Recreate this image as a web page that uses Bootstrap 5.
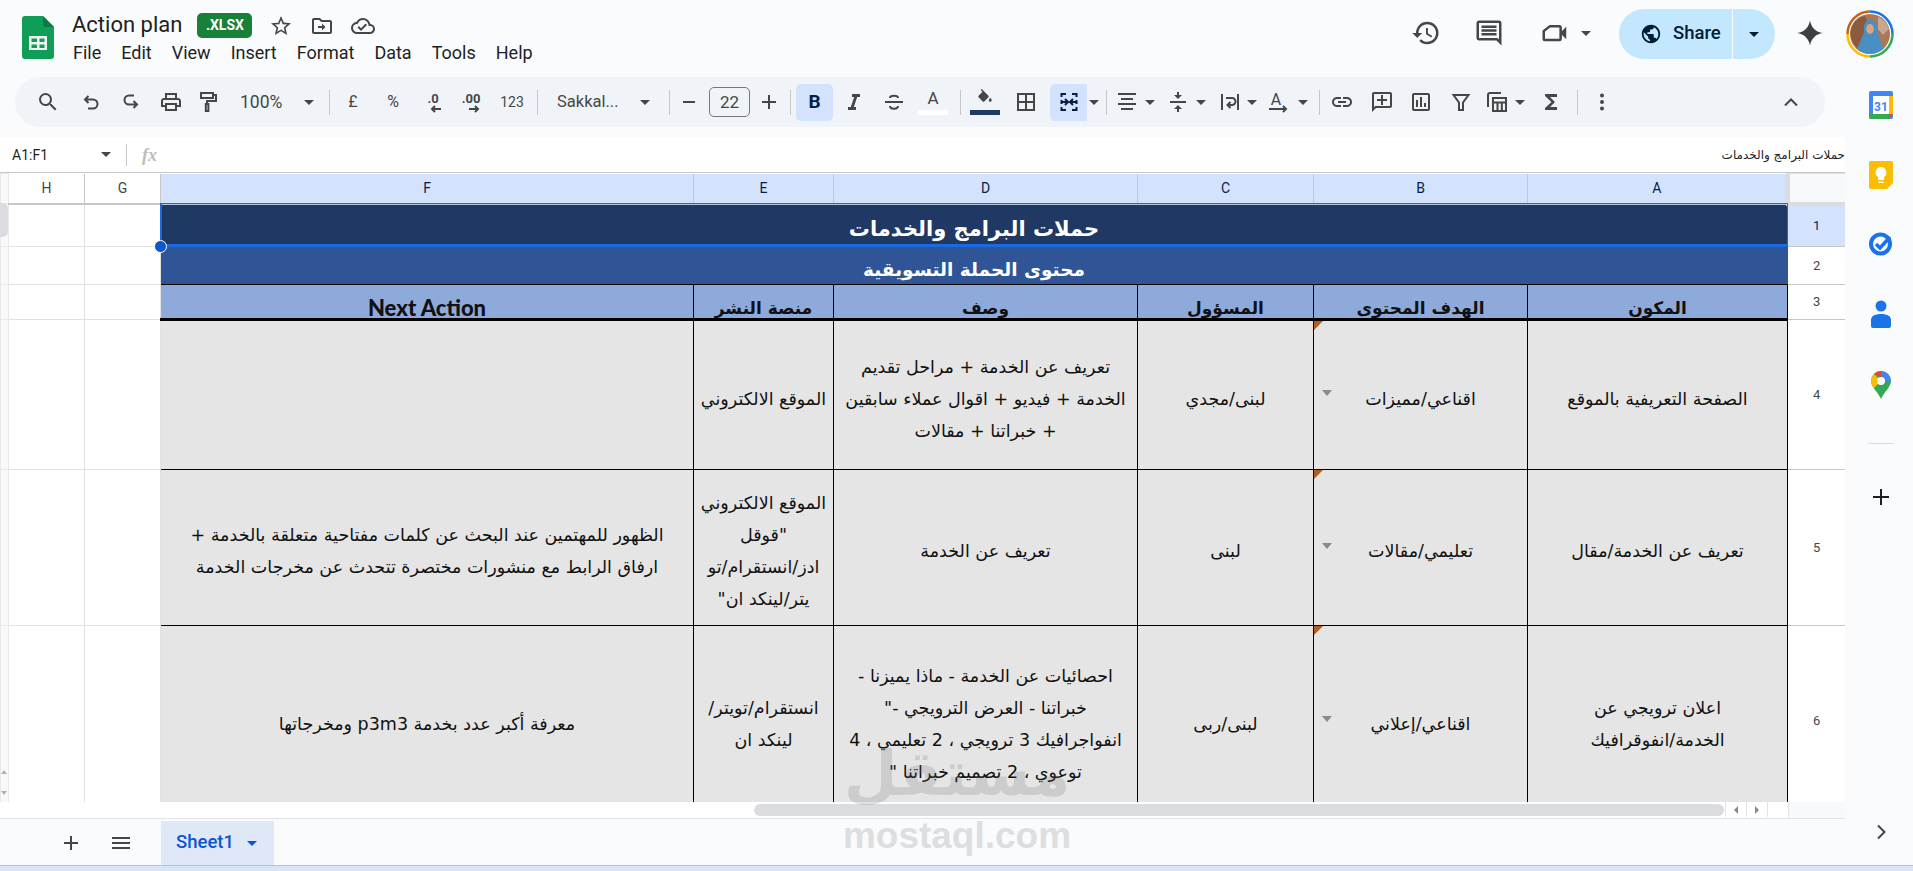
<!DOCTYPE html>
<html lang="en">
<head>
<meta charset="utf-8">
<title>Action plan</title>
<link href="https://cdn.jsdelivr.net/npm/bootstrap@5.3.0/dist/css/bootstrap.min.css" rel="stylesheet">
<style>
html,body{margin:0;height:871px;width:1913px;overflow:hidden;background:#f9fbfd;font-family:Roboto,"Liberation Sans",sans-serif;color:#1f1f1f}
svg{display:block;flex:none}
.ic{width:24px;height:24px;fill:#444746;flex:none}
.st{fill:none;stroke:#444746;stroke-width:2}
.topbar{height:77px;position:relative}
.logo{width:32px;height:43px;margin:16px 0 0 22px}
.titlecol{margin-left:18px;padding-top:9px}
.doctitle{font-size:22px;line-height:32px;color:#1f1f1f}
.xl{background:#188038;color:#fff;font-size:14px;font-weight:700;border-radius:5px;width:55px;height:25px;line-height:25px;text-align:center;margin-left:15px;margin-top:4px}
.tt1{margin-left:17px;margin-top:5px}.tt2{margin-left:17px;margin-top:5px}
.menuitem{font-size:18px;line-height:24px;color:#1f1f1f;margin-right:20px}
.menurow{margin-top:0;margin-left:1px}
.hic{width:30px;height:30px;fill:#444746;margin-top:18px}
.hg33{margin-left:33px}.hg36{margin-left:36px}
.caretm{margin-top:31px}
.sharebtn{height:50px;width:156px;background:#c2e7ff;border-radius:25px;color:#001d35;margin:9px 0 0 28px}
.sharemain{width:114px;border-right:1px solid #f9fbfd;padding-left:21px;gap:11px;font-size:18.5px;font-weight:500}
.sharecaret{width:41px}
.sglobe{width:22px;height:22px;fill:#001d35}
.gem{margin:19px 0 0 21px;width:28px;height:28px;fill:#3c4043}
.avatar{width:50px;height:50px;margin:9px 18px 0 21px}
.caret{width:10px;height:5px;flex:none;fill:#444746}
.mainarea{width:1845px;flex:none}
.tbwrap{height:60px;padding:0 20px 10px 15px}
.pill{height:50px;background:#f0f4f9;border-radius:25px}
.tsep{width:1px;height:25px;background:#c7c7c7;flex:none}
.tt{font-size:17.5px;color:#444746;flex:none}
.tsak{font-size:16.5px}
.w45{width:45px}.w66{width:66px}
.fs-box{width:41px;height:30px;border:1px solid #747775;border-radius:5px;text-align:center;line-height:28px;font-size:17px;color:#444746;flex:none}
.tog{width:37px;height:37px;background:#d3e3fd;flex:none;border-radius:5px}
.togl{border-radius:5px 0 0 5px}
.blet{font-weight:700;font-size:19px;color:#041e49}
.alet{width:30px;flex:none;text-align:center;font-size:17px;line-height:17px;color:#444746}
.colorbar{height:5px;width:30px;margin-top:3px}
.bfill{background:#1f3864}.bwhite{background:#fff}
.g2{margin-left:2px}.g5{margin-left:5px}.g6{margin-left:6px}.g7{margin-left:7px}.g8{margin-left:8px}.g9{margin-left:9px}.g10{margin-left:10px}.g11{margin-left:11px}.g12{margin-left:12px}.g13{margin-left:13px}.g14{margin-left:14px}.g15{margin-left:15px}.g16{margin-left:16px}.g17{margin-left:17px}.g19{margin-left:19px}.g20{margin-left:20px}.g21{margin-left:21px}
.collapsebtn{margin-right:22px}
.fxbar{height:35px;background:#fff;position:relative}
.namebox{width:127px;padding-left:12px;font-size:14px;border-right:1px solid #c7c7c7;height:22px;line-height:22px;color:#1f1f1f}
.namecaretw{margin-left:auto;margin-right:15px}
.fxlbl{font-family:"Liberation Serif",serif;font-style:italic;font-size:18px;font-weight:700;color:#bdbdbd;margin-left:15px;line-height:22px}
.fxval{font-size:12px;line-height:30px;color:#222;font-family:"DejaVu Sans",sans-serif;letter-spacing:-.7px}
.sheetwrap{height:630px;overflow:hidden;position:relative;background:#fff;border-top:1px solid #c7c7c7}
.sheet{table-layout:fixed;width:1845px;border-collapse:collapse;font-family:"DejaVu Sans",sans-serif}
.sheet td{padding:0;text-align:center;vertical-align:middle;overflow:hidden;border:1px solid #e1e1e1}
.cstub{width:8px}.ch{width:76px}.cf{width:533px}.ce{width:140px}.cd{width:304px}.cc{width:176px}.cb{width:214px}.ca{width:260px}.crh{width:58px}
.rhead{height:30px}.r1{height:43px}.r2{height:38px}.r3{height:35px}.r4{height:150px}.r5{height:156px}.r6{height:190px}
.sheet td.colh{font-family:Roboto,sans-serif;font-size:14px;color:#444746;border-color:#c7c7c7;border-top:0;border-bottom:2px solid #c7c7c7}
.sheet td.colsel{background:#d3e3fd;color:#041e49;border-bottom-color:#b5c5dd}
.sheet td.corner{background:#f8f9fa;border-left:4px solid #dadce0;border-bottom:4px solid #dadce0}
.sheet td.stub{background:#f8f9fa;border-color:#e9e9e9}
.sheet td.rown{font-family:Roboto,sans-serif;font-size:13px;color:#444746;border-color:#c7c7c7;border-right:0}
.sheet td.rowsel{background:#d3e3fd;color:#041e49}
.sheet td.t1{background:#1f3864;color:#fff;font-size:21px;font-weight:700;border:1px solid #1f3864;border-bottom:0;padding-top:8px}
.sheet td.t2{background:#2f5597;color:#fff;font-size:18.5px;font-weight:700;border:1px solid #2f5597;border-bottom:1px solid #000;padding-top:8px;line-height:26px}
.sheet td.hdc{background:#8eaadb;color:#111;font-weight:700;font-size:17px;border:1px solid #000;border-bottom:3px solid #000;vertical-align:bottom}
.hdi{height:32px;line-height:44px;overflow:hidden;white-space:nowrap}
.hdlat{font-family:Lato,sans-serif;font-size:22px;font-weight:900}
.sheet td.dc{background:#e5e5e5;color:#111;font-size:17.5px;line-height:32px;border:1px solid #000;white-space:nowrap;position:relative;padding-top:7px}
.note{position:absolute;left:0;top:0;width:0;height:0;border-top:9px solid #b85c1a;border-right:9px solid transparent}
.dd{position:absolute;left:8px;top:50%;margin-top:-5px;width:0;height:0;border-top:6px solid #8a8a8a;border-left:5px solid transparent;border-right:5px solid transparent}
.sel{position:absolute;left:160px;top:30px;width:1628px;height:44px;border:1px solid #1a6ae4;border-left-width:2px;border-bottom-width:3px;pointer-events:none}
.handle{position:absolute;left:154px;top:67px;width:13px;height:13px;border-radius:50%;background:#0b57d0;border:1px solid #fff}
.vthumb{position:absolute;left:0;top:30px;width:8px;height:34px;background:#dadce0;border-radius:0 5px 5px 0}
.varr{position:absolute;left:1px;width:0;height:0;border-left:3px solid transparent;border-right:3px solid transparent}
.vup{top:597px;border-bottom:4px solid #b0b0b0}
.vdn{top:618px;border-top:4px solid #b0b0b0}
.hbar{height:16px;background:#fff;position:relative}
.hthumb{width:980px;height:12px;margin:2px 0 0 754px;background:#dadce0;border-radius:6px}
.harr{width:21px;border-left:1px solid #e3e3e3;height:15px;flex:none}
.ha1{margin-left:1px}
.hl,.hr{width:0;height:0;border-top:4px solid transparent;border-bottom:4px solid transparent}
.hl{border-right:4px solid #888}.hr{border-left:4px solid #888}
.hcor{width:58px;background:#f8f9fa;margin-left:auto;border-left:1px solid #e3e3e3}
.tabbar{height:47px;border-top:1px solid #e1e3e6;padding-top:2px}
.tabadd{margin-left:59px}
.tabmenu{margin-left:26px}
.stab{width:113px;height:44px;margin-left:28px;background:#dfe8f6;color:#0b57d0;font-weight:500;font-size:18.5px;padding-left:15px;gap:13px}
.caretb{fill:#0b57d0}
.sidep{width:68px;flex:none;padding-top:13px;height:788px}
.sico{width:26px;height:30px;margin-left:23px}
.sp1{margin-top:0}.sp2{margin-top:40px}.sp3{margin-top:39px}.sp4{margin-top:40px}.sp5{margin-top:41px}
.sline{width:26px;height:1px;background:#dadce0;margin:43px 0 0 23px}
.sadd{margin:41px 0 0 24px}
.schev{margin:311px 0 0 24px}
.wall{height:6px;background:#d7e5f6;border-top:1px solid #b9c3d0}
.wm{position:absolute;left:842px;top:732px;width:230px;text-align:center;color:#6d6d6d;opacity:.2;pointer-events:none;z-index:5}
.wm1{font-family:"DejaVu Sans",sans-serif;font-weight:700;font-size:62px;line-height:84px;white-space:nowrap}
.wm2{font-family:"Liberation Sans",sans-serif;font-weight:700;font-size:37px;line-height:40px;white-space:nowrap}
</style>
</head>
<body>
<div class="topbar d-flex">
  <svg class="logo" viewBox="0 0 32 43"><path d="M3 0h18l11 11v29a3 3 0 0 1-3 3H3a3 3 0 0 1-3-3V3a3 3 0 0 1 3-3z" fill="#0f9d58"/><path d="M21 0l11 11H23a2 2 0 0 1-2-2z" fill="#0b7a45"/><path d="M7 20h18v14H7zm2.500 2.500v3.500h5.500v-3.500zm8 0v3.500h5v-3.500zm-8 6v3.500h5.500v-3.500zm8 0v3.500h5v-3.500z" fill="#f1f1f1" fill-rule="evenodd"/></svg>
  <div class="titlecol">
    <div class="d-flex align-items-start">
      <div class="doctitle">Action plan</div>
      <div class="xl">.XLSX</div>
      <svg class="ic tt1" viewBox="0 0 24 24"><path d="M22 9.240l-7.190-.62L12 2 9.190 8.630 2 9.240l5.460 4.730L5.820 21 12 17.270 18.180 21l-1.630-7.030L22 9.240zM12 15.400l-3.760 2.270 1-4.280-3.320-2.880 4.380-.38L12 6.100l1.710 4.040 4.380.38-3.320 2.880 1 4.280L12 15.400z"/></svg>
      <svg class="ic tt2" viewBox="0 0 24 24"><path d="M20 6h-8l-2-2H4c-1.100 0-2 .9-2 2v12c0 1.100.9 2 2 2h16c1.100 0 2-.9 2-2V8c0-1.100-.9-2-2-2zm0 12H4V6h5.170l2 2H20v10z"/><path d="M12 12H8v2h4v2.500l3.500-3.500L12 9.500z"/></svg>
      <svg class="ic tt2" viewBox="0 0 24 24"><path d="M19.350 10.040A7.490 7.490 0 0 0 12 4C9.110 4 6.600 5.640 5.350 8.040A5.994 5.994 0 0 0 0 14c0 3.310 2.690 6 6 6h13c2.760 0 5-2.240 5-5 0-2.640-2.050-4.780-4.650-4.960zM19 18H6c-2.210 0-4-1.790-4-4 0-2.050 1.530-3.760 3.560-3.970l1.070-.11.5-.95A5.469 5.469 0 0 1 12 6c2.620 0 4.880 1.860 5.390 4.430l.3 1.500 1.530.11A2.980 2.980 0 0 1 22 15c0 1.650-1.350 3-3 3zm-9-3.820l-2.090-2.090L6.500 13.500 10 17l6.010-6.010-1.410-1.410z"/></svg>
    </div>
    <div class="d-flex menurow">
      <span class="menuitem">File</span><span class="menuitem">Edit</span><span class="menuitem">View</span><span class="menuitem">Insert</span><span class="menuitem">Format</span><span class="menuitem">Data</span><span class="menuitem">Tools</span><span class="menuitem">Help</span>
    </div>
  </div>
  <div class="ms-auto d-flex align-items-start">
    <svg class="hic" viewBox="0 0 24 24"><path d="M13 3a9 9 0 0 0-9 9H1l3.890 3.890.07.14L9 12H6c0-3.870 3.130-7 7-7s7 3.130 7 7-3.130 7-7 7c-1.930 0-3.680-.79-4.940-2.060l-1.420 1.420A8.954 8.954 0 0 0 13 21a9 9 0 0 0 0-18zm-1 5v5l4.280 2.540.72-1.210-3.500-2.080V8H12z"/></svg>
    <svg class="hic hg33" viewBox="0 0 24 24"><path d="M21.990 4c0-1.100-.89-2-1.990-2H4c-1.100 0-2 .9-2 2v12c0 1.100.9 2 2 2h14l4 4-.01-18zM20 4v13.170L18.830 16H4V4h16zM6 12h12v2H6zm0-3h12v2H6zm0-3h12v2H6z"/></svg>
    <svg class="hic hg36" viewBox="0 0 24 24"><path class="st" d="M8 6.500h7.500a1 1 0 0 1 1 1v9a1 1 0 0 1-1 1H4a1 1 0 0 1-1-1v-6z"/><path d="M17 11l4-4v10l-4-4z"/></svg>
    <svg class="caret g11 caretm" viewBox="0 0 10 5"><path d="M0 0h10L5 5z"/></svg>
    <div class="sharebtn d-flex">
      <div class="sharemain d-flex align-items-center">
        <svg class="sglobe" viewBox="0 0 24 24"><path d="M12 2C6.480 2 2 6.480 2 12s4.480 10 10 10 10-4.480 10-10S17.520 2 12 2zm-1 17.930c-3.950-.49-7-3.850-7-7.930 0-.62.08-1.210.21-1.790L9 15v1c0 1.100.9 2 2 2v1.930zm6.900-2.540c-.26-.81-1-1.390-1.900-1.390h-1v-3c0-.55-.45-1-1-1H8v-2h2c.55 0 1-.45 1-1V7h2c1.100 0 2-.9 2-2v-.41c2.930 1.190 5 4.060 5 7.410 0 2.080-.8 3.970-2.100 5.390z"/></svg>
        <span>Share</span>
      </div>
      <div class="sharecaret d-flex align-items-center justify-content-center">
        <svg class="caret" viewBox="0 0 10 5"><path fill="#001d35" d="M0 0h10L5 5z"/></svg>
      </div>
    </div>
    <svg class="gem" viewBox="0 0 24 24"><path d="M12 1C12.800 7 17 11.200 23 12 17 12.800 12.800 17 12 23 11.200 17 7 12.800 1 12 7 11.200 11.200 7 12 1z"/></svg>
    <svg class="avatar" viewBox="0 0 50 50">
      <circle cx="25" cy="25" r="20" fill="#a9785a"/>
      <path d="M6 20a19.500 19.500 0 0 1 14-13L25 20l-8 22a20 20 0 0 1-11-22z" fill="#8c5a3c"/>
      <path d="M33 8a20 20 0 0 1 11 12l-6 6-5-6z" fill="#c7a78f"/>
      <path d="M25 11c5 0 7 4 7 9 0 3 1 6 3 10l3 10a20 20 0 0 1-26 0l5-12c2-4 2-5 2-8 0-5 1-9 6-9z" fill="#4a8fc4"/>
      <ellipse cx="25" cy="20" rx="3.800" ry="5" fill="#d9a583"/>
      <path d="M25 2.500a22.500 22.500 0 0 1 22.500 22.500" fill="none" stroke="#1a73e8" stroke-width="2.500"/>
      <path d="M47.500 25A22.500 22.500 0 0 1 25 47.500" fill="none" stroke="#34a853" stroke-width="2.500"/>
      <path d="M25 47.500A22.500 22.500 0 0 1 2.500 25" fill="none" stroke="#fbbc04" stroke-width="2.500"/>
      <path d="M2.500 25A22.500 22.500 0 0 1 25 2.500" fill="none" stroke="#c5620f" stroke-width="2.500"/>
    </svg>
  </div>
</div>

<div class="d-flex">
  <div class="mainarea">
    <div class="tbwrap">
      <div class="pill d-flex align-items-center">
        <svg class="ic g21" viewBox="0 0 24 24"><path d="M15.500 14h-.79l-.28-.27A6.471 6.471 0 0 0 16 9.500 6.500 6.500 0 1 0 9.500 16c1.610 0 3.090-.59 4.230-1.570l.27.28v.79l5 4.990L20.490 19l-4.990-5zm-6 0C7.010 14 5 11.990 5 9.500S7.010 5 9.500 5 14 7.010 14 9.500 11.990 14 9.500 14z"/></svg>
        <svg class="ic g19" viewBox="0 0 24 24"><path class="st" d="M9.500 6 6 9.500l3.500 3.500M6 9.500h8a4.500 4.500 0 0 1 0 9H9"/></svg>
        <svg class="ic g16" viewBox="0 0 24 24"><path class="st" d="M14.500 18l3.500-3.500-3.500-3.500M18 14.500h-8a4.500 4.500 0 0 1 0-9h5"/></svg>
        <svg class="ic g16" viewBox="0 0 24 24"><path d="M19 8h-1V3H6v5H5c-1.660 0-3 1.340-3 3v6h4v4h12v-4h4v-6c0-1.660-1.340-3-3-3zM8 5h8v3H8V5zm8 12v2H8v-4h8v2zm2-2v-2H6v2H4v-4c0-.55.45-1 1-1h14c.55 0 1 .45 1 1v4h-2z"/></svg>
        <svg class="ic g13" viewBox="0 0 24 24"><path class="st" d="M5 3h12v5H5zM17 5h3v6h-9v3M9.800 14h2.600v7H9.800z"/></svg>
        <span class="tt g20 w45">100%</span>
        <svg class="caret g19" viewBox="0 0 10 5"><path d="M0 0h10L5 5z"/></svg>
        <div class="tsep g15"></div>
        <svg class="ic g11" viewBox="0 0 24 24"><text x="12" y="17" text-anchor="middle" font-size="16" fill="#444746" font-family="Roboto">£</text></svg>
        <svg class="ic g16" viewBox="0 0 24 24"><text x="12" y="17" text-anchor="middle" font-size="16" fill="#444746" font-family="Roboto">%</text></svg>
        <svg class="ic g16" viewBox="0 0 24 24"><text x="12" y="13" text-anchor="middle" font-size="13" font-weight="700" fill="#444746" font-family="Roboto">.0</text><path class="st" stroke-width="1.500" d="M20 19h-9M14 16l-3 3 3 3"/></svg>
        <svg class="ic g14" viewBox="0 0 24 24"><text x="12" y="13" text-anchor="middle" font-size="13" font-weight="700" fill="#444746" font-family="Roboto">.00</text><path class="st" stroke-width="1.500" d="M10 19h9M16 16l3 3-3 3"/></svg>
        <svg class="ic g17" viewBox="0 0 24 24"><text x="12" y="17" text-anchor="middle" font-size="14" fill="#444746" font-family="Roboto">123</text></svg>
        <div class="tsep g13"></div>
        <span class="tt tsak g19 w66">Sakkal...</span>
        <svg class="caret g17" viewBox="0 0 10 5"><path d="M0 0h10L5 5z"/></svg>
        <div class="tsep g19"></div>
        <svg class="ic g7" viewBox="0 0 24 24"><path d="M6 11h12v2H6z"/></svg>
        <div class="fs-box g8">22</div>
        <svg class="ic g7" viewBox="0 0 24 24"><path d="M11 5h2v6h6v2h-6v6h-2v-6H5v-2h6z"/></svg>
        <div class="tsep g9"></div>
        <div class="tog g5 d-flex align-items-center justify-content-center"><span class="blet">B</span></div>
        <svg class="ic g9" viewBox="0 0 24 24"><path d="M10 4v3h2.210l-3.420 10H6v3h8v-3h-2.210l3.420-10H18V4z"/></svg>
        <svg class="ic g16" viewBox="0 0 24 24"><path d="M3 11h18v2H3z"/><path class="st" d="M8 8c0-3 8-3 8 0M8 16c0 3.500 8 3.500 8 0"/></svg>
        <div class="alet g12"><div>A</div><div class="colorbar bwhite"></div></div>
        <div class="tsep g12"></div>
        <div class="alet g9">
          <svg width="24" height="18" viewBox="0 0 24 24" class="mx-auto"><path fill="#444746" d="M16.560 8.940 7.620 0 6.210 1.410l2.380 2.380-5.150 5.150a1.490 1.490 0 0 0 0 2.120l5.500 5.500c.29.29.68.44 1.060.44s.77-.15 1.060-.44l5.500-5.500c.59-.58.59-1.530 0-2.120zM19 11.500s-2 2.170-2 3.500c0 1.100.9 2 2 2s2-.9 2-2c0-1.330-2-3.500-2-3.500z"/></svg>
          <div class="colorbar bfill"></div>
        </div>
        <svg class="ic g14" viewBox="0 0 24 24"><path d="M3 3v18h18V3H3zm8 16H5v-6h6v6zm0-8H5V5h6v6zm8 8h-6v-6h6v6zm0-8h-6V5h6v6z"/></svg>
        <div class="tog togl g12 d-flex align-items-center justify-content-center">
          <svg width="24" height="24" viewBox="0 0 24 24"><path fill="none" stroke="#041e49" stroke-width="2" d="M9 4H4.500v3M4.500 10v4M4.500 17v3H9M15 4h4.500v3M19.500 10v4M19.500 17v3H15M4 12h7M8 9l3 3-3 3M20 12h-7M16 9l-3 3 3 3"/></svg>
        </div>
        <svg class="caret g2" viewBox="0 0 10 5"><path d="M0 0h10L5 5z"/></svg>
        <div class="tsep g7"></div>
        <svg class="ic g8" viewBox="0 0 24 24"><path d="M3 3h18v2H3zM6 8h12v2H6zM3 13h18v2H3zM6 18h12v2H6z"/></svg>
        <svg class="caret g6" viewBox="0 0 10 5"><path d="M0 0h10L5 5z"/></svg>
        <svg class="ic g11" viewBox="0 0 24 24"><path d="M8 19h3v3h2v-3h3l-4-4-4 4zm8-14h-3V2h-2v3H8l4 4 4-4zM4 11v2h16v-2H4z"/></svg>
        <svg class="caret g6" viewBox="0 0 10 5"><path d="M0 0h10L5 5z"/></svg>
        <svg class="ic g12" viewBox="0 0 24 24"><path class="st" d="M4 4v16M20 4v16M8 8h6a3.500 3.500 0 0 1 0 7h-4M12.500 12l-3 3 3 3"/></svg>
        <svg class="caret g5" viewBox="0 0 10 5"><path d="M0 0h10L5 5z"/></svg>
        <svg class="ic g10" viewBox="0 0 24 24"><text x="9" y="15" text-anchor="middle" font-size="16" fill="#444746" font-family="Roboto">A</text><path class="st" stroke-width="1.500" d="M2 19h17M16 16l3 3-3 3"/></svg>
        <svg class="caret g7" viewBox="0 0 10 5"><path d="M0 0h10L5 5z"/></svg>
        <div class="tsep g11"></div>
        <svg class="ic g10" viewBox="0 0 24 24"><path d="M3.900 12c0-1.710 1.390-3.100 3.100-3.100h4V7H7c-2.760 0-5 2.240-5 5s2.240 5 5 5h4v-1.900H7c-1.710 0-3.100-1.390-3.100-3.100zM8 13h8v-2H8v2zm9-6h-4v1.900h4c1.710 0 3.100 1.390 3.100 3.100s-1.390 3.100-3.100 3.100h-4V17h4c2.760 0 5-2.240 5-5s-2.240-5-5-5z"/></svg>
        <svg class="ic g16" viewBox="0 0 24 24"><path d="M20 2H4c-1.100 0-2 .9-2 2v18l4-4h14c1.100 0 2-.9 2-2V4c0-1.100-.9-2-2-2zm0 14H5.170L4 17.170V4h16v12zM11 5h2v4h4v2h-4v4h-2v-4H7V9h4z"/></svg>
        <svg class="ic g15" viewBox="0 0 24 24"><path d="M19 3H5c-1.100 0-2 .9-2 2v14c0 1.100.9 2 2 2h14c1.100 0 2-.9 2-2V5c0-1.100-.9-2-2-2zm0 16H5V5h14v14zM7 10h2v7H7zm4-3h2v10h-2zm4 6h2v4h-2z"/></svg>
        <svg class="ic g16" viewBox="0 0 24 24"><path class="st" d="M4.500 5h15L14 12.500V20h-4v-7.500z"/></svg>
        <svg class="ic g12" viewBox="0 0 24 24"><path class="st" d="M3 17V5a2 2 0 0 1 2-2h11M8 8h13v13H8zM8 12.500h13M12.500 12.500V21M16.800 12.500V21"/></svg>
        <svg class="caret g6" viewBox="0 0 10 5"><path d="M0 0h10L5 5z"/></svg>
        <svg class="ic g14" viewBox="0 0 24 24"><path d="M18 4H6v2l6.500 6L6 18v2h12v-3h-7l5-5-5-5h7z"/></svg>
        <div class="tsep g14"></div>
        <svg class="ic g12" viewBox="0 0 24 24"><circle cx="12" cy="5.500" r="2"/><circle cx="12" cy="12" r="2"/><circle cx="12" cy="18.500" r="2"/></svg>
        <svg class="ic ms-auto collapsebtn" viewBox="0 0 24 24"><path class="st" d="M6 15.500l6-6 6 6"/></svg>
      </div>
    </div>

    <div class="fxbar d-flex align-items-center">
      <div class="namebox d-flex align-items-center"><span>A1:F1</span><svg class="caret namecaretw" viewBox="0 0 10 5"><path d="M0 0h10L5 5z"/></svg></div>
      <span class="fxlbl">fx</span>
      <span class="fxval ms-auto" dir="rtl">حملات البرامج والخدمات</span>
    </div>

    <div class="sheetwrap">
      <table class="sheet">
        <colgroup><col class="cstub"><col class="ch"><col class="ch"><col class="cf"><col class="ce"><col class="cd"><col class="cc"><col class="cb"><col class="ca"><col class="crh"></colgroup>
        <tr class="rhead">
          <td class="stub"></td><td class="colh">H</td><td class="colh">G</td><td class="colh colsel">F</td><td class="colh colsel">E</td><td class="colh colsel">D</td><td class="colh colsel">C</td><td class="colh colsel">B</td><td class="colh colsel">A</td><td class="corner"></td>
        </tr>
        <tr class="r1"><td class="stub"></td><td></td><td></td><td colspan="6" class="t1" dir="rtl">حملات البرامج والخدمات</td><td class="rown rowsel">1</td></tr>
        <tr class="r2"><td class="stub"></td><td></td><td></td><td colspan="6" class="t2" dir="rtl">محتوى الحملة التسويقية</td><td class="rown">2</td></tr>
        <tr class="r3"><td class="stub"></td><td></td><td></td>
          <td class="hdc"><div class="hdi hdlat">Next Action</div></td>
          <td class="hdc" dir="rtl"><div class="hdi">منصة النشر</div></td>
          <td class="hdc" dir="rtl"><div class="hdi">وصف</div></td>
          <td class="hdc" dir="rtl"><div class="hdi">المسؤول</div></td>
          <td class="hdc" dir="rtl"><div class="hdi">الهدف المحتوى</div></td>
          <td class="hdc" dir="rtl"><div class="hdi">المكون</div></td>
          <td class="rown">3</td></tr>
        <tr class="r4"><td class="stub"></td><td></td><td></td>
          <td class="dc"></td>
          <td class="dc" dir="rtl">الموقع الالكتروني</td>
          <td class="dc" dir="rtl">تعريف عن الخدمة + مراحل تقديم<br>الخدمة + فيديو + اقوال عملاء سابقين<br>+ خبراتنا + مقالات</td>
          <td class="dc" dir="rtl">لبنى/مجدي</td>
          <td class="dc" dir="rtl"><span class="note"></span><span class="dd"></span>اقناعي/مميزات</td>
          <td class="dc" dir="rtl">الصفحة التعريفية بالموقع</td>
          <td class="rown">4</td></tr>
        <tr class="r5"><td class="stub"></td><td></td><td></td>
          <td class="dc" dir="rtl">الظهور للمهتمين عند البحث عن كلمات مفتاحية متعلقة بالخدمة +<br>ارفاق الرابط مع منشورات مختصرة تتحدث عن مخرجات الخدمة</td>
          <td class="dc" dir="rtl">الموقع الالكتروني<br>"قوقل<br>ادز/انستقرام/تو<br>يتر/لينكد ان"</td>
          <td class="dc" dir="rtl">تعريف عن الخدمة</td>
          <td class="dc" dir="rtl">لبنى</td>
          <td class="dc" dir="rtl"><span class="note"></span><span class="dd"></span>تعليمي/مقالات</td>
          <td class="dc" dir="rtl">تعريف عن الخدمة/مقال</td>
          <td class="rown">5</td></tr>
        <tr class="r6"><td class="stub"></td><td></td><td></td>
          <td class="dc" dir="rtl">معرفة أكبر عدد بخدمة p3m3 ومخرجاتها</td>
          <td class="dc" dir="rtl">انستقرام/تويتر/<br>لينكد ان</td>
          <td class="dc" dir="rtl">احصائيات عن الخدمة - ماذا يميزنا -<br>خبراتنا - العرض الترويجي -"<br>انفواجرافيك 3 ترويجي ، 2 تعليمي ، 4<br>توعوي ، 2 تصميم خبراتنا "</td>
          <td class="dc" dir="rtl">لبنى/ربى</td>
          <td class="dc" dir="rtl"><span class="note"></span><span class="dd"></span>اقناعي/إعلاني</td>
          <td class="dc" dir="rtl">اعلان ترويجي عن<br>الخدمة/انفوقرافيك</td>
          <td class="rown">6</td></tr>
      </table>
      <div class="sel"></div>
      <div class="handle"></div>
      <div class="vthumb"></div>
      <div class="varr vup"></div>
      <div class="varr vdn"></div>
    </div>

    <div class="hbar d-flex">
      <div class="hthumb"></div>
      <div class="harr ha1 d-flex align-items-center justify-content-center"><div class="hl"></div></div>
      <div class="harr d-flex align-items-center justify-content-center"><div class="hr"></div></div>
      <div class="harr"></div>
      <div class="hcor"></div>
    </div>

    <div class="tabbar d-flex align-items-center">
      <svg class="ic tabadd" viewBox="0 0 24 24"><path d="M11 5h2v6h6v2h-6v6h-2v-6H5v-2h6z"/></svg>
      <svg class="ic tabmenu" viewBox="0 0 24 24"><path d="M3 6h18v2H3zM3 11h18v2H3zM3 16h18v2H3z"/></svg>
      <div class="stab d-flex align-items-center"><span>Sheet1</span><svg class="caret caretb" viewBox="0 0 10 5"><path d="M0 0h10L5 5z"/></svg></div>
    </div>
  </div>

  <aside class="sidep">
    <svg class="sico sp1" viewBox="0 0 26 30"><rect x="1" y="1" width="24" height="28" rx="2" fill="#4285f4"/><rect x="5" y="6" width="16" height="18" fill="#fff"/><path d="M1 24h20v5H3a2 2 0 0 1-2-2z" fill="#34a853"/><path d="M21 6h4v18h-4z" fill="#fbbc04"/><path d="M21 24h4l-4 5z" fill="#ea4335"/><text x="13" y="20.500" text-anchor="middle" font-size="12" font-weight="700" fill="#4285f4" font-family="Roboto">31</text></svg>
    <svg class="sico sp2" viewBox="0 0 26 30"><path d="M3 1h20a2 2 0 0 1 2 2v20l-6 6H3a2 2 0 0 1-2-2V3a2 2 0 0 1 2-2z" fill="#fbbc04"/><path d="M13 7a5.500 5.500 0 0 1 3 10v3h-6v-3a5.500 5.500 0 0 1 3-10zM10.500 21.500h5V23h-5z" fill="#fff"/></svg>
    <svg class="sico sp3" viewBox="0 0 26 30"><circle cx="12.500" cy="15" r="9.500" fill="none" stroke="#1a73e8" stroke-width="4"/><path d="M8 15l4 4 10-11" fill="none" stroke="#1a73e8" stroke-width="3.500"/></svg>
    <svg class="sico sp4" viewBox="0 0 26 30"><circle cx="13" cy="7" r="5.500" fill="#1a73e8"/><path d="M3 27v-6c0-4 4-6 10-6s10 2 10 6v6a2 2 0 0 1-2 2H5a2 2 0 0 1-2-2z" fill="#1a73e8"/></svg>
    <svg class="sico sp5" viewBox="0 0 26 30"><path d="M13 1a10 10 0 0 1 10 10c0 6-7 11-10 18-3-7-10-12-10-18A10 10 0 0 1 13 1z" fill="#34a853"/><path d="M3 11A10 10 0 0 1 6 4l7 7-7 7c-2-2-3-4-3-7z" fill="#fbbc04"/><path d="M6 4a10 10 0 0 1 7-3v6z" fill="#ea4335"/><path d="M13 1a10 10 0 0 1 10 10l-7 0z" fill="#4285f4"/><circle cx="13" cy="11" r="4" fill="#fff"/></svg>
    <div class="sline"></div>
    <svg class="ic sadd" viewBox="0 0 24 24"><path fill="#1f1f1f" d="M11 4h2v7h7v2h-7v7h-2v-7H4v-2h7z"/></svg>
    <svg class="ic schev" viewBox="0 0 24 24"><path class="st" d="M9 5.500l6.500 6.500L9 18.500"/></svg>
  </aside>
</div>
<div class="wall"></div>

<div class="wm">
  <div class="wm1" dir="rtl">مستقل</div>
  <div class="wm2">mostaql.com</div>
</div>
<script src="https://cdn.jsdelivr.net/npm/bootstrap@5.3.0/dist/js/bootstrap.bundle.min.js"></script>
</body>
</html>
